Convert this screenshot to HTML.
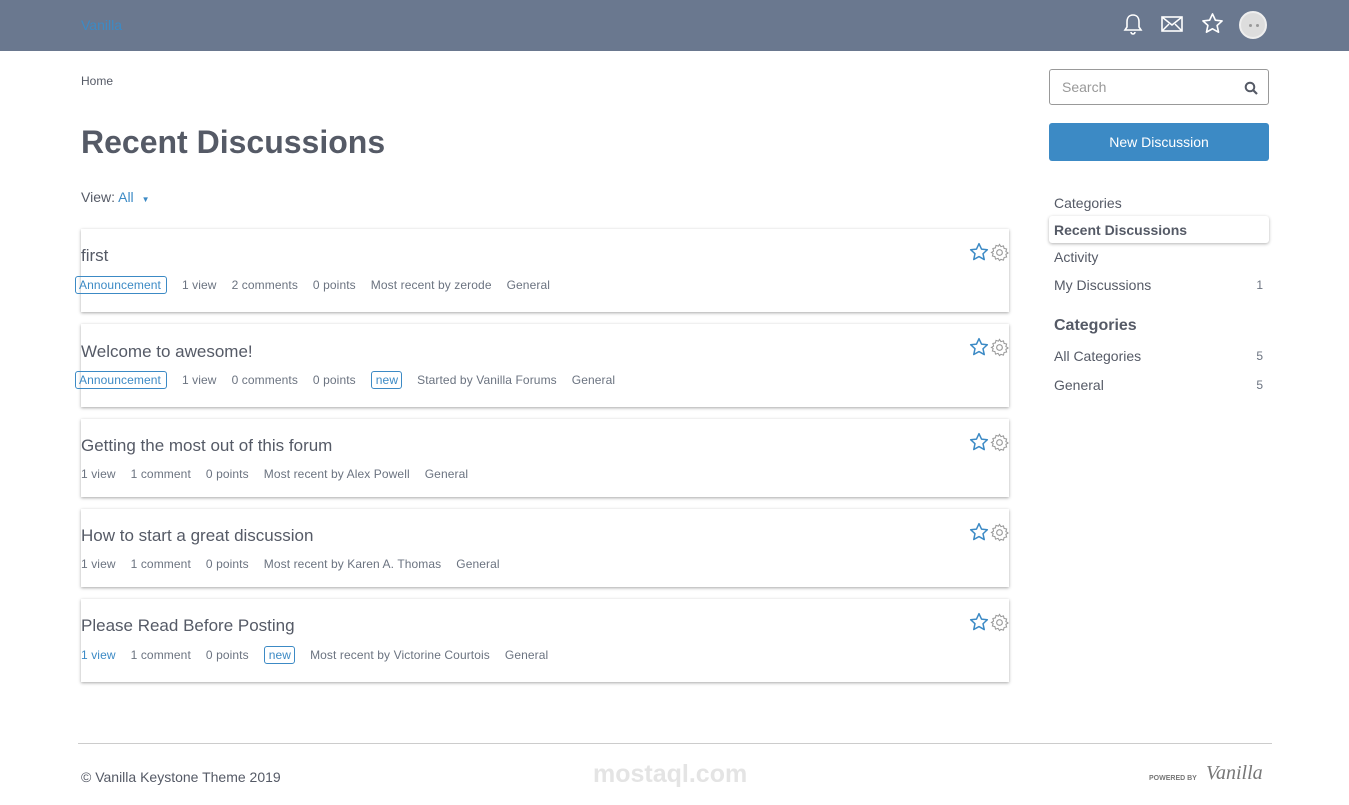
<!DOCTYPE html>
<html><head><meta charset="utf-8"><style>
*{box-sizing:border-box;margin:0;padding:0}
body{width:1349px;height:805px;background:#fff;font-family:"Liberation Sans",sans-serif;color:#555a66;position:relative;overflow:hidden}
.hdr{position:absolute;left:0;top:0;width:1349px;height:51px;background:#6a788f}
.logo{position:absolute;left:81px;top:17px;font-size:14px;color:#3c8ac5}
.ico{position:absolute;top:12px}
.abs{position:absolute}
h1{position:absolute;left:81px;top:124px;font-size:32px;font-weight:bold;color:#555a66;letter-spacing:0}
.card{position:absolute;left:81px;width:928px;background:#fff;box-shadow:0 1px 3px rgba(0,0,0,.35)}
.t{position:absolute;left:0;font-size:17px;color:#555a66}
.m{position:absolute;left:0;font-size:12px;color:#6b7380;white-space:nowrap;letter-spacing:0.1px}
.m span{margin-right:15px}
.tag{border:1px solid #3c8ac5;border-radius:3px;padding:1px 3px 1px 4px;color:#3c8ac5}
.ann{margin-left:-6px;padding:1px 5px 1px 3px}
.st{position:absolute;right:20px;top:13px}
.gear{position:absolute;right:0;top:14px}
.nav{position:absolute;left:1054px;font-size:14px;color:#555a66}
.cnt{position:absolute;right:86px;font-size:12px;color:#6b7380}
</style></head><body>
<div class="hdr"><div class="logo">Vanilla</div>
<svg class="ico" style="left:1122px" width="22" height="24" viewBox="0 0 22 24"><path d="M11 3c-4 0-6 3-6 7v5l-2 3h16l-2-3v-5c0-4-2-7-6-7zM9 20a2 2 0 0 0 4 0" fill="none" stroke="#fff" stroke-width="1.6"/></svg>
<svg class="ico" style="left:1161px;top:15px" width="22" height="18" viewBox="0 0 22 18"><rect x="1" y="2" width="20" height="14" fill="none" stroke="#fff" stroke-width="1.6"/><path d="M1 2l10 8 10-8M1 16l7-7M21 16l-7-7" fill="none" stroke="#fff" stroke-width="1.5"/></svg>
<svg class="ico" style="left:1201px" width="23" height="23" viewBox="0 0 24 24"><path d="M12 2l3 6.5 7 .8-5.2 4.8 1.5 7L12 17.5 5.7 21l1.5-7L2 9.3l7-.8z" fill="none" stroke="#fff" stroke-width="1.7" stroke-linejoin="round"/></svg>
<div class="abs" style="left:1239px;top:11px;width:28px;height:28px;border-radius:50%;background:#ddd;border:2px solid #eee"><div class="abs" style="left:8px;top:11px;width:3px;height:3px;background:#999;border-radius:50%"></div><div class="abs" style="left:15px;top:11px;width:3px;height:3px;background:#999;border-radius:50%"></div></div>
</div>
<div class="abs" style="left:81px;top:74px;font-size:12px">Home</div>
<h1>Recent Discussions</h1>
<div class="abs" style="left:81px;top:189px;font-size:14px">View: <span style="color:#3c8ac5">All</span> <span style="font-size:8px;color:#3c8ac5;margin-left:4px">▼</span></div>

<div class="card" style="top:229px;height:83px"><div class="t" style="top:17px">first</div><div class="m" style="top:49px"><span class="tag ann">Announcement</span><span>1 view</span><span>2 comments</span><span>0 points</span><span>Most recent by zerode</span><span>General</span></div><div class="st">STAR</div></div>
<div class="card" style="top:324px;height:83px"><div class="t" style="top:18px">Welcome to awesome!</div><div class="m" style="top:49px"><span class="tag ann">Announcement</span><span>1 view</span><span>0 comments</span><span>0 points</span><span class="tag">new</span><span>Started by Vanilla Forums</span><span>General</span></div></div>
<div class="card" style="top:419px;height:78px"><div class="t" style="top:17px">Getting the most out of this forum</div><div class="m" style="top:48px"><span>1 view</span><span>1 comment</span><span>0 points</span><span>Most recent by Alex Powell</span><span>General</span></div></div>
<div class="card" style="top:509px;height:78px"><div class="t" style="top:17px">How to start a great discussion</div><div class="m" style="top:48px"><span>1 view</span><span>1 comment</span><span>0 points</span><span>Most recent by Karen A. Thomas</span><span>General</span></div></div>
<div class="card" style="top:599px;height:83px"><div class="t" style="top:17px">Please Read Before Posting</div><div class="m" style="top:49px"><span style="color:#3c8ac5">1 view</span><span>1 comment</span><span>0 points</span><span class="tag">new</span><span>Most recent by Victorine Courtois</span><span>General</span></div></div>

<div class="abs" style="left:1049px;top:69px;width:220px;height:36px;border:1px solid #999;border-radius:3px"><span class="abs" style="left:12px;top:9px;font-size:14px;color:#999">Search</span><svg class="abs" style="left:194px;top:11px" width="14" height="14" viewBox="0 0 14 14"><circle cx="6" cy="6" r="4.3" fill="none" stroke="#555a66" stroke-width="2"/><path d="M9 9l4 4" stroke="#555a66" stroke-width="2.2"/></svg></div>
<div class="abs" style="left:1049px;top:123px;width:220px;height:38px;background:#3c8ac5;border-radius:3px;color:#fff;font-size:14px;text-align:center;line-height:38px">New Discussion</div>
<div class="nav" style="top:195px">Categories</div>
<div class="abs" style="left:1049px;top:216px;width:220px;height:27px;box-shadow:0 1px 3px rgba(0,0,0,.3);border-radius:3px"></div>
<div class="nav" style="top:222px;font-weight:bold">Recent Discussions</div>
<div class="nav" style="top:249px">Activity</div>
<div class="nav" style="top:277px">My Discussions</div><div class="cnt" style="top:278px">1</div>
<div class="nav" style="top:317px;font-size:16px;font-weight:bold">Categories</div>
<div class="nav" style="top:348px">All Categories</div><div class="cnt" style="top:349px">5</div>
<div class="nav" style="top:377px">General</div><div class="cnt" style="top:378px">5</div>

<div class="abs" style="left:78px;top:743px;width:1194px;height:1px;background:#ccc"></div>
<div class="abs" style="left:81px;top:769px;font-size:14px">© Vanilla Keystone Theme 2019</div>
<div class="abs" style="left:593px;top:760px;font-size:25px;color:#e4e4e4;font-weight:bold">mostaql.com</div>
<div class="abs" style="left:1149px;top:775px;font-size:7px;color:#777;font-weight:bold">POWERED BY</div>
<div class="abs" style="left:1206px;top:762px;font-size:20px;color:#777;font-style:italic;font-family:'Liberation Serif',serif">Vanilla</div>
<script>
var s='<svg width="20" height="20" viewBox="0 0 24 24"><path d="M12 2l3 6.5 7 .8-5.2 4.8 1.5 7L12 17.5 5.7 21l1.5-7L2 9.3l7-.8z" fill="none" stroke="#3c8ac5" stroke-width="1.8" stroke-linejoin="round"/></svg>';
var g='<svg width="19" height="19" viewBox="0 0 20 20"><circle cx="10" cy="10" r="3" fill="none" stroke="#999" stroke-width="1.2"/><path d="M10 1.5l1.5 2.3 2.7-.8.6 2.7 2.7.6-.8 2.7 2.3 1.5-2.3 1.5.8 2.7-2.7.6-.6 2.7-2.7-.8L10 18.5l-1.5-2.3-2.7.8-.6-2.7-2.7-.6.8-2.7L1.5 10l2.3-1.5-.8-2.7 2.7-.6.6-2.7 2.7.8z" fill="none" stroke="#999" stroke-width="1.1"/></svg>';
document.querySelectorAll('.card').forEach(function(c){var st=c.querySelector('.st');if(!st){st=document.createElement('div');st.className='st';c.appendChild(st);}st.innerHTML=s;var d=document.createElement('div');d.className='gear';d.innerHTML=g;c.appendChild(d);});
</script>
</body></html>
